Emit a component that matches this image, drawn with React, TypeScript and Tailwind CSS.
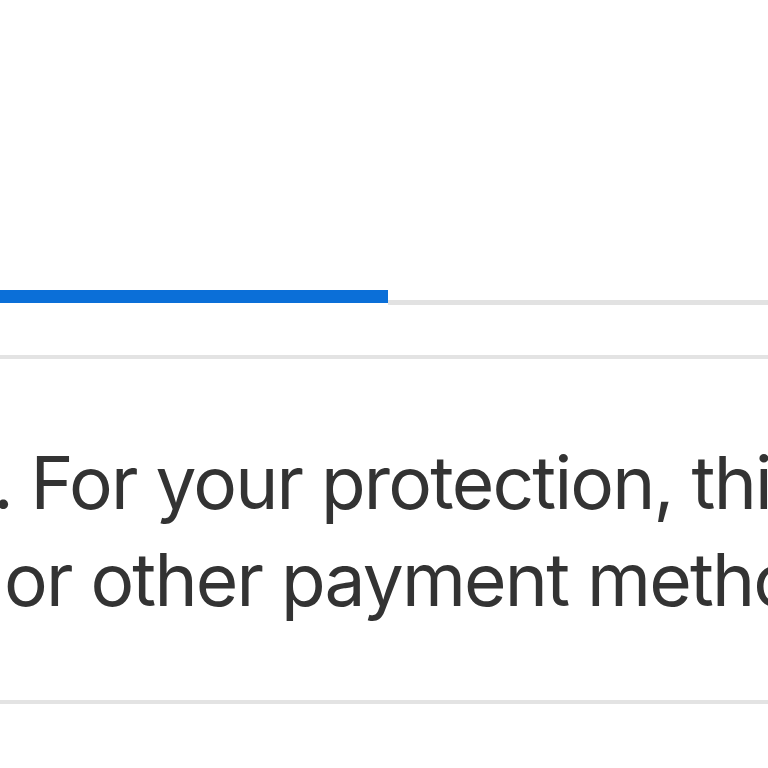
export default function App() {
  return (
    <div className="w-[768px] h-[768px] bg-white overflow-hidden" style={{ fontFamily: "Inter, 'Noto Sans', sans-serif" }}>
      <div className="h-[290px]" />
      <div className="flex items-start h-[15px]">
        <div className="w-[388px] h-[13px] bg-[#0b6fd8]" />
        <div className="flex-1 h-[5px] mt-[10px] bg-[#e2e2e2]" />
      </div>
      <div className="h-[50px]" />
      <div className="h-[4px] bg-[#e3e3e3]" />
      <div className="text-[73px] leading-[97px] tracking-[-1.8px] text-[#333333] whitespace-nowrap pt-[75px]">
        <div className="ml-[-91px]">ed. For your protection, this</div>
        <div className="ml-[4px]">or other payment method</div>
      </div>
      <div className="h-[4px] mt-[72px] bg-[#e3e3e3]" />
    </div>
  );
}
